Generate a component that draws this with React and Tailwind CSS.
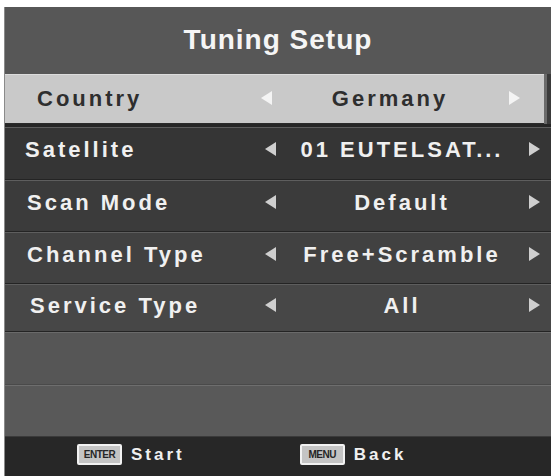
import React from "react";

const FONT = { fontFamily: '"Liberation Sans", Arial, sans-serif' };

function Arrow({ dir, color }) {
  const pts = dir === "left" ? "11,0 11,14 0,7" : "0,0 0,14 11,7";
  return (
    <svg width="11" height="14" viewBox="0 0 11 14" className="block">
      <polygon points={pts} fill={color} />
    </svg>
  );
}

function Row({ label, value, bg, labelPad, cols, selected, textShift }) {
  const arrowColor = selected ? "#f4f4f4" : "#cfcfcf";
  const text = selected ? "text-[#2e2e2e]" : "text-[#f0f0f0]";
  return (
    <div
      className={`grid h-full items-center border-t border-b ${cols} ${bg} ${
        selected ? "border-t-[#dcdcdc] border-b-[#2b2b2b]" : "border-t-[#5e5e5e] border-b-[#242424]"
      }`}
    >
      <div className={`${labelPad} ${textShift} ${text} text-[22px] font-bold tracking-[3px] whitespace-nowrap`}>
        {label}
      </div>
      <div className={`flex justify-center ${textShift}`}>
        <Arrow dir="left" color={arrowColor} />
      </div>
      <div className={`text-center ${textShift} ${text} text-[22px] font-bold tracking-[3px] whitespace-nowrap`}>
        {value}
      </div>
      <div className={`flex justify-center ${textShift}`}>
        <Arrow dir="right" color={arrowColor} />
      </div>
    </div>
  );
}

function KeyBadge({ children }) {
  return (
    <span className="flex h-[21px] w-[45px] items-center justify-center rounded-[2px] border-2 border-[#f2f2f2] bg-[#c4c4c4] text-[10px] font-bold leading-none tracking-[-0.5px] text-[#262626]">
      {children}
    </span>
  );
}

export default function App() {
  const rowCols = "grid-cols-[255px_20px_244px_20px]";
  return (
    <div className="h-[476px] w-[553px] overflow-hidden bg-white" style={FONT}>
      <div className="ml-[4px] mt-[7px] flex h-[469px] w-[547px] flex-col border-l border-[#8a8a8a] bg-[#3a3a3a]">
        {/* title bar */}
        <div className="flex h-[67px] items-center justify-center bg-[#575757] pb-[2px]">
          <span className="text-[28px] font-bold tracking-[1px] text-[#f5f5f5]">Tuning Setup</span>
        </div>

        {/* highlighted row */}
        <div className="h-[50px] w-[542px] border-r-[3px] border-[#6a6a6a]">
          <Row
            label="Country"
            value="Germany"
            bg="bg-[#c9c9c9]"
            labelPad="pl-[32px]"
            cols="grid-cols-[251px_20px_228px_20px]"
            selected
            textShift="pb-[2px]"
          />
        </div>
        <div className="h-[3px] bg-[#262626]" />

        <div className="h-[53px]">
          <Row label="Satellite" value="01 EUTELSAT..." bg="bg-[#353535]" labelPad="pl-[20px]" cols={rowCols} textShift="pb-[9px]" />
        </div>
        <div className="h-[52px]">
          <Row label="Scan Mode" value="Default" bg="bg-[#3b3b3b]" labelPad="pl-[22px]" cols={rowCols} textShift="pb-[8px]" />
        </div>
        <div className="h-[52px]">
          <Row label="Channel Type" value="Free+Scramble" bg="bg-[#414141]" labelPad="pl-[22px]" cols={rowCols} textShift="pb-[8px]" />
        </div>
        <div className="h-[48px]">
          <Row label="Service Type" value="All" bg="bg-[#474747]" labelPad="pl-[25px]" cols={rowCols} textShift="pb-[6px]" />
        </div>

        {/* unused slots */}
        <div className="h-[53px] border-t border-b border-t-[#6a6a6a] border-b-[#4a4a4a] bg-[#565656]" />
        <div className="h-[52px] border-t border-b border-t-[#6e6e6e] border-b-[#3a3a3a] bg-[#595959]" />

        {/* key hints */}
        <div className="flex flex-1 items-start bg-[#272727] pt-[5px]">
          <div className="ml-[72px] flex items-center gap-[9px]">
            <KeyBadge>ENTER</KeyBadge>
            <span className="text-[17px] font-bold tracking-[3px] text-[#f0f0f0]">Start</span>
          </div>
          <div className="ml-[115px] flex items-center gap-[9px]">
            <KeyBadge>MENU</KeyBadge>
            <span className="text-[17px] font-bold tracking-[3px] text-[#f0f0f0]">Back</span>
          </div>
        </div>
      </div>
    </div>
  );
}
